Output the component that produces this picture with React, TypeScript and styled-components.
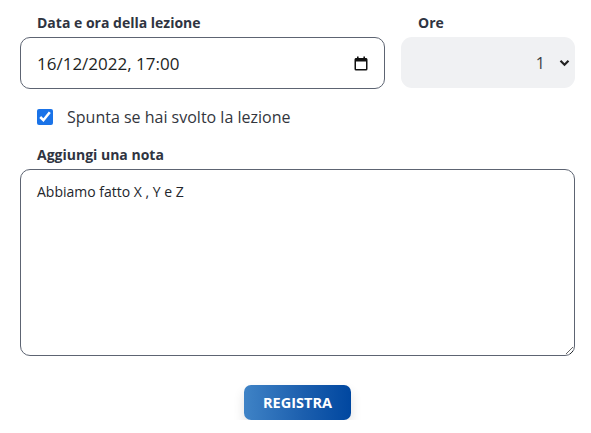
import styled, { createGlobalStyle } from "styled-components"

const GlobalStyle = createGlobalStyle`
    body {
        margin: 0;
        background: #ffffff;
        font-family: "Open Sans", "Noto Sans", sans-serif;
        color: #2f3441;
    }
`

export default function App() {
    return (
        <Page>
            <GlobalStyle />
            <TopRow>
                <Field>
                    <Label>Data e ora della lezione</Label>
                    <DateBox>
                        <DateInput type="text" defaultValue="16/12/2022, 17:00" />
                        <IconButton type="button" aria-label="calendario">
                            <svg width="14" height="15" viewBox="0 0 14 15">
                                <rect x="1.25" y="2.75" width="11.5" height="11" rx="0.8" fill="none" stroke="#111" strokeWidth="1.5" />
                                <rect x="1" y="2.5" width="12" height="3" fill="#111" />
                                <rect x="3" y="0.5" width="1.6" height="3" fill="#111" />
                                <rect x="9.4" y="0.5" width="1.6" height="3" fill="#111" />
                            </svg>
                        </IconButton>
                    </DateBox>
                </Field>
                <Field>
                    <Label>Ore</Label>
                    <SelectBox>
                        <Select defaultValue="1">
                            <option value="1">1</option>
                            <option value="2">2</option>
                            <option value="3">3</option>
                        </Select>
                        <svg width="11" height="8" viewBox="0 0 11 8">
                            <path d="M1.5 1.8 L5.5 5.8 L9.5 1.8" fill="none" stroke="#222" strokeWidth="2.2" />
                        </svg>
                    </SelectBox>
                </Field>
            </TopRow>

            <CheckRow>
                <Check type="checkbox" defaultChecked />
                <span>Spunta se hai svolto la lezione</span>
            </CheckRow>

            <Field>
                <Label>Aggiungi una nota</Label>
                <Note defaultValue="Abbiamo fatto X , Y e Z" />
            </Field>

            <Actions>
                <Submit type="button">REGISTRA</Submit>
            </Actions>
        </Page>
    )
}

const Page = styled.div`
    padding: 13px 16px 0 20px;
    display: flex;
    flex-direction: column;
`
const TopRow = styled.div`
    display: grid;
    grid-template-columns: 365px 174px;
    gap: 16px;
`
const Field = styled.div`
    display: flex;
    flex-direction: column;
`
const Label = styled.label`
    font-size: 14px;
    font-weight: 700;
    line-height: 19px;
    padding-left: 17px;
    margin-bottom: 5px;
    color: #2f3441;
`
const DateBox = styled.div`
    display: flex;
    align-items: center;
    height: 50px;
    border: 1px solid #5d6472;
    border-radius: 10px;
    padding: 0 16px 0 16px;
`
const DateInput = styled.input`
    flex: 1;
    border: none;
    outline: none;
    background: transparent;
    font-family: "Open Sans", "Noto Sans", sans-serif;
    font-size: 17px;
    color: #1d1f24;
    padding: 0;
`
const IconButton = styled.button`
    border: none;
    background: transparent;
    padding: 0;
    display: flex;
`
const SelectBox = styled.div`
    display: flex;
    align-items: center;
    height: 51px;
    background: #f0f1f3;
    border-radius: 11px;
    padding: 0 5px 0 16px;
    gap: 14px;
`
const Select = styled.select`
    flex: 1;
    appearance: none;
    border: none;
    outline: none;
    background: transparent;
    font-family: "Open Sans", "Noto Sans", sans-serif;
    font-size: 16px;
    color: #3a3d44;
    text-align: right;
    text-align-last: right;
    padding: 0;
`
const CheckRow = styled.label`
    display: flex;
    align-items: center;
    gap: 14px;
    margin: 17px 0 17px 17px;
    font-size: 16px;
    line-height: 22px;
    color: #33363d;
`
const Check = styled.input`
    width: 16px;
    height: 16px;
    margin: 0;
    accent-color: #1a73e8;
`
const Note = styled.textarea`
    height: 187px;
    box-sizing: border-box;
    border: 1px solid #5d6472;
    border-radius: 10px;
    padding: 12px 16px;
    font-family: "Open Sans", "Noto Sans", sans-serif;
    font-size: 14px;
    line-height: 20px;
    color: #23262c;
    outline: none;
`
const Actions = styled.div`
    display: flex;
    justify-content: center;
    margin-top: 29px;
`
const Submit = styled.button`
    width: 107px;
    height: 35px;
    border: none;
    border-radius: 7px;
    background: linear-gradient(90deg, #3f83c6 0%, #1c5fae 55%, #0047a0 100%);
    color: #ffffff;
    font-family: "Open Sans", "Noto Sans", sans-serif;
    font-size: 14.5px;
    font-weight: 700;
    box-shadow: 0 6px 12px rgba(0, 0, 0, 0.12);
    cursor: pointer;
`
